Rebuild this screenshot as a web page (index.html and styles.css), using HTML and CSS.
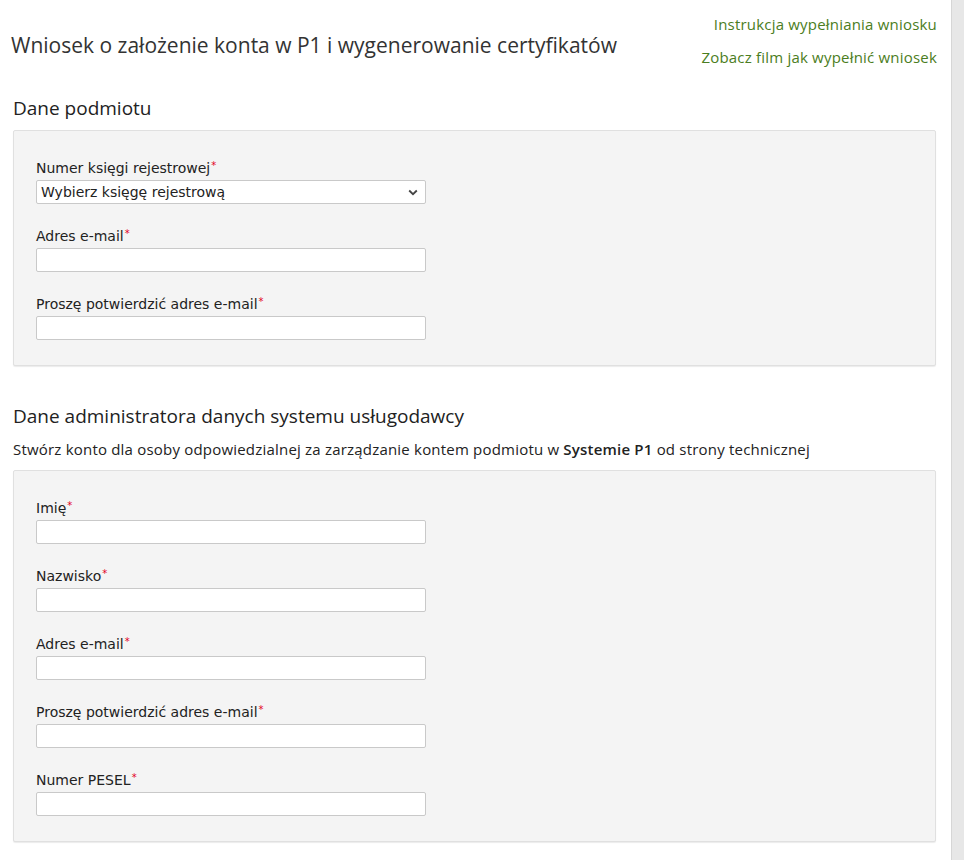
FILE: index.html
```html
<!DOCTYPE html>
<html lang="pl">
<head>
<meta charset="utf-8">
<title>Wniosek o założenie konta w P1</title>
<link rel="stylesheet" href="styles.css">
</head>
<body>
<div class="page">
  <header class="header">
    <h1 class="title">Wniosek o założenie konta w P1 i wygenerowanie certyfikatów</h1>
    <nav class="links">
      <a class="link" href="#">Instrukcja wypełniania wniosku</a>
      <a class="link" href="#">Zobacz film jak wypełnić wniosek</a>
    </nav>
  </header>

  <section class="section">
    <h2 class="section-title first">Dane podmiotu</h2>
    <div class="panel">
      <div class="group">
        <label class="label">Numer księgi rejestrowej<span class="req">*</span></label>
        <div class="select">
          <span class="select-text">Wybierz księgę rejestrową</span>
          <svg class="chevron" width="10" height="7" viewBox="0 0 10 7"><path d="M1.2 1.5 L5 5.2 L8.8 1.5" fill="none" stroke="#444" stroke-width="1.8"/></svg>
        </div>
      </div>
      <div class="group">
        <label class="label">Adres e-mail<span class="req">*</span></label>
        <input class="input" type="text">
      </div>
      <div class="group">
        <label class="label">Proszę potwierdzić adres e-mail<span class="req">*</span></label>
        <input class="input" type="text">
      </div>
    </div>
  </section>

  <section class="section">
    <h2 class="section-title second">Dane administratora danych systemu usługodawcy</h2>
    <p class="intro">Stwórz konto dla osoby odpowiedzialnej za zarządzanie kontem podmiotu w <strong>Systemie P1</strong> od strony technicznej</p>
    <div class="panel">
      <div class="group">
        <label class="label">Imię<span class="req">*</span></label>
        <input class="input" type="text">
      </div>
      <div class="group">
        <label class="label">Nazwisko<span class="req">*</span></label>
        <input class="input" type="text">
      </div>
      <div class="group">
        <label class="label">Adres e-mail<span class="req">*</span></label>
        <input class="input" type="text">
      </div>
      <div class="group">
        <label class="label">Proszę potwierdzić adres e-mail<span class="req">*</span></label>
        <input class="input" type="text">
      </div>
      <div class="group">
        <label class="label">Numer PESEL<span class="req">*</span></label>
        <input class="input" type="text">
      </div>
    </div>
  </section>
</div>
</body>
</html>
```

FILE: styles.css
```css
html, body {
  margin: 0;
  padding: 0;
}
body {
  background: #e7e7e7;
  font-family: "Open Sans", "Noto Sans", sans-serif;
  color: #333;
  height: 860px;
  overflow: hidden;
}
.page {
  width: 952px;
  min-height: 860px;
  background: #fff;
  border-right: 1px solid #d6d6d6;
  box-sizing: border-box;
}
.header {
  display: flex;
  justify-content: space-between;
  align-items: flex-start;
  padding: 8px 14px 0 11px;
}
.title {
  margin: 23px 0 0;
  font-size: 21px;
  line-height: 28px;
  font-weight: 400;
  color: #333;
}
.links {
  display: flex;
  flex-direction: column;
  align-items: flex-end;
}
.link {
  font-size: 15px;
  letter-spacing: 0.2px;
  line-height: 33px;
  color: #4b7d22;
  text-decoration: none;
}
.section {
  padding: 0 15px 0 13px;
}
.section-title {
  margin: 0;
  font-size: 19px;
  line-height: 26px;
  font-weight: 500;
  color: #222;
}
.section-title.first {
  margin-top: 21px;
  margin-bottom: 9px;
}
.section-title.second {
  margin-top: 37px;
  margin-bottom: 10px;
}
.intro {
  margin: 0 0 11px;
  font-size: 15px;
  letter-spacing: 0.2px;
  line-height: 20px;
  color: #222;
}
.intro strong {
  font-weight: 600;
}
.panel {
  background: #f4f4f4;
  border: 1px solid #e0e0e0;
  border-radius: 2px;
  box-shadow: 0 1px 1px rgba(0,0,0,0.08);
  padding: 27px 22px 25px;
  display: flex;
  flex-direction: column;
  gap: 22px;
}
.group {
  display: flex;
  flex-direction: column;
  gap: 2px;
}
.label {
  font-family: "DejaVu Sans", "Open Sans", sans-serif;
  font-size: 14px;
  line-height: 20px;
  height: 20px;
  color: #222;
}
.req {
  position: relative;
  top: -4px;
  color: #e3001b;
  font-size: 10px;
  margin-left: 1px;
}
.input,
.select {
  width: 390px;
  height: 24px;
  box-sizing: border-box;
  border: 1px solid #c9c9c9;
  border-radius: 2px;
  background: #fff;
  margin: 0;
  padding: 0 4px;
  font-family: inherit;
  font-size: 14px;
}
.select {
  display: flex;
  align-items: center;
  justify-content: space-between;
  padding: 0 7px 0 4px;
}
.select-text {
  font-family: "DejaVu Sans", "Open Sans", sans-serif;
  font-size: 14px;
  color: #222;
}
.chevron {
  display: block;
}
```
